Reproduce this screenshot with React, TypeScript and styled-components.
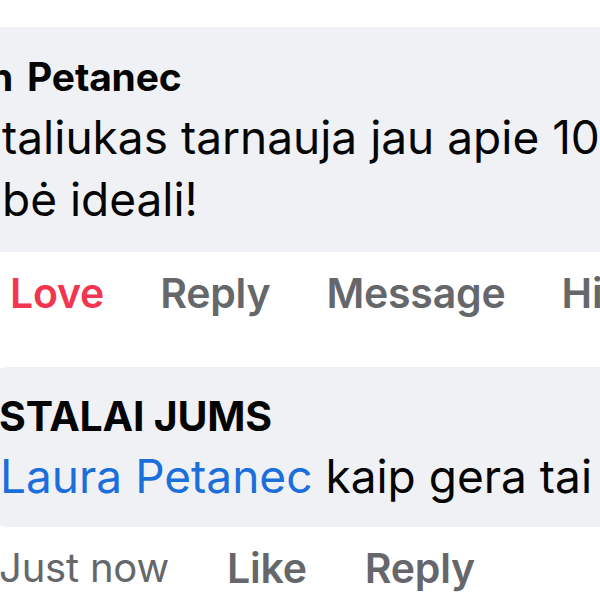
import styled, { createGlobalStyle } from 'styled-components';

const GlobalStyle = createGlobalStyle`
  html, body {
    margin: 0;
    padding: 0;
    background: #ffffff;
  }

  body {
    font-family: Inter, "Noto Sans", "Liberation Sans", sans-serif;
    -webkit-font-smoothing: antialiased;
    color: #050505;
  }
`;

const Viewport = styled.div`
  width: 600px;
  height: 600px;
  overflow: hidden;
  background: #ffffff;
`;

const Thread = styled.div`
  display: flex;
  flex-direction: column;
  align-items: flex-start;
  padding-top: 27px;
`;

const Bubble = styled.div<{ $offset: number; $height: number; $padTop: number }>`
  display: flex;
  flex-direction: column;
  box-sizing: border-box;
  margin-left: ${({ $offset }) => $offset}px;
  padding: ${({ $padTop }) => $padTop}px 0 0 ${({ $offset }) => -$offset}px;
  width: 900px;
  height: ${({ $height }) => $height}px;
  background: #f0f1f5;
  border-radius: 34px;
`;

const Author = styled.div<{ $size: number; $shift: number; $wordGap?: number }>`
  margin-left: ${({ $shift }) => $shift}px;
  font-size: ${({ $size }) => $size}px;
  line-height: 46px;
  font-weight: 700;
  letter-spacing: -0.2px;
  word-spacing: ${({ $wordGap }) => $wordGap ?? 0}px;
  white-space: nowrap;
`;

const Body = styled.div<{ $gap: number; $shift?: number }>`
  margin-top: ${({ $gap }) => $gap}px;
  margin-left: ${({ $shift }) => $shift ?? 0}px;
  font-size: 46px;
  line-height: 62px;
  font-weight: 400;
  white-space: nowrap;
`;

const Mention = styled.span`
  color: #1b6fdb;
`;

const Actions = styled.div<{ $top: number; $bottom: number; $gap: number }>`
  display: flex;
  gap: ${({ $gap }) => $gap}px;
  margin-top: ${({ $top }) => $top}px;
  margin-bottom: ${({ $bottom }) => $bottom}px;
  white-space: nowrap;
`;

const Action = styled.span<{ $tone?: 'love' | 'muted'; $light?: boolean; $shift?: number }>`
  margin-left: ${({ $shift }) => $shift ?? 0}px;
  font-size: ${({ $light }) => ($light ? 40 : 41)}px;
  line-height: 50px;
  font-weight: ${({ $light }) => ($light ? 400 : 600)};
  letter-spacing: -0.2px;
  color: ${({ $tone }) => ($tone === 'love' ? '#f2364f' : '#65676b')};
`;

export default function App() {
  return (
    <>
      <GlobalStyle />
      <Viewport>
        <Thread>
          <Bubble $offset={-60} $height={225} $padTop={27}>
            <Author $size={39} $shift={-11} $wordGap={5}>n Petanec</Author>
            <Body $gap={6} $shift={2}>
              taliukas tarnauja jau apie 10
              <br />
              bė ideali!
            </Body>
          </Bubble>

          <Actions $top={16} $bottom={49} $gap={56}>
            <Action $tone="love" $shift={10}>Love</Action>
            <Action>Reply</Action>
            <Action>Message</Action>
            <Action>Hide</Action>
          </Actions>

          <Bubble $offset={-24} $height={160} $padTop={26}>
            <Author $size={41} $shift={-1}>STALAI JUMS</Author>
            <Body $gap={6}>
              <Mention>Laura Petanec</Mention> kaip gera tai
            </Body>
          </Bubble>

          <Actions $top={16} $bottom={0} $gap={58}>
            <Action $light $shift={-1}>Just now</Action>
            <Action>Like</Action>
            <Action>Reply</Action>
          </Actions>
        </Thread>
      </Viewport>
    </>
  );
}
